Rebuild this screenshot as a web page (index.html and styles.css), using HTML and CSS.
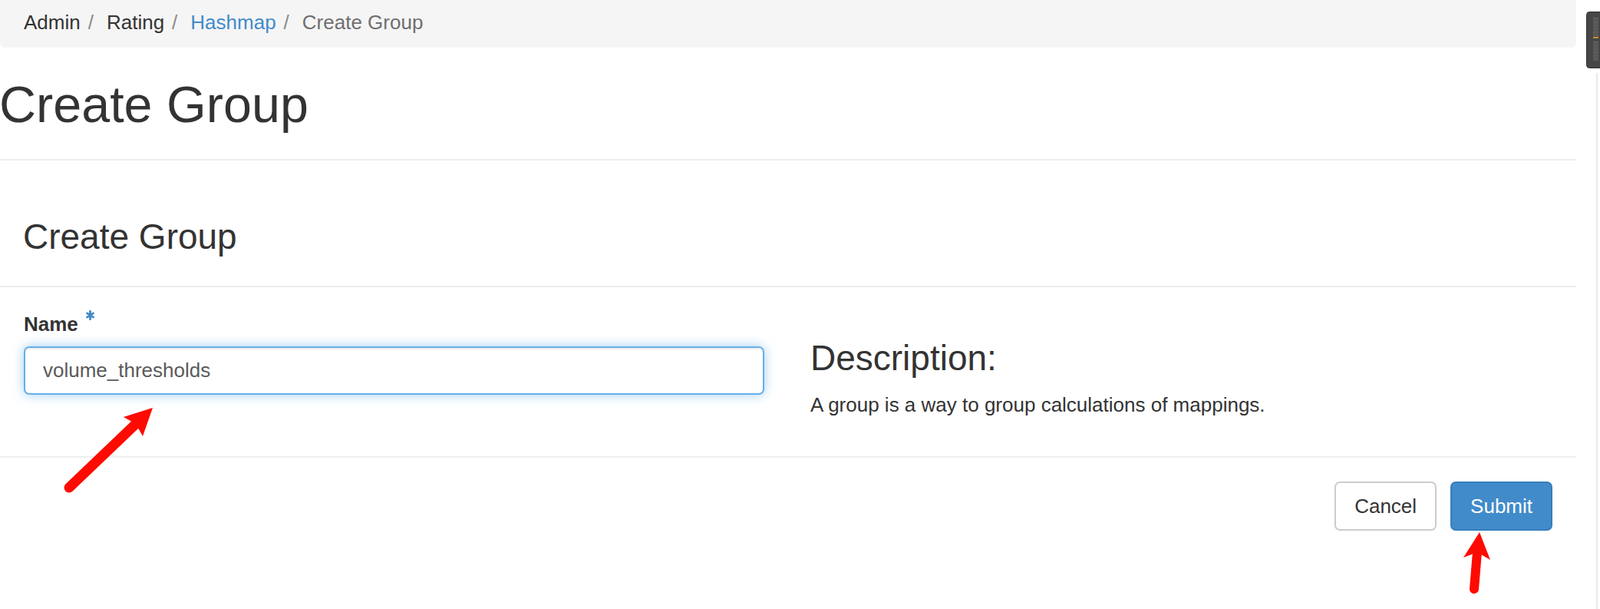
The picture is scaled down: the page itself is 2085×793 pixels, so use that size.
FILE: index.html
```html
<!DOCTYPE html>
<html lang="en">
<head>
<meta charset="utf-8">
<title>Create Group</title>
<link rel="stylesheet" href="styles.css">
</head>
<body>
<div class="page">
  <ol class="breadcrumb">
    <li>Admin</li>
    <li>Rating</li>
    <li><a href="#">Hashmap</a></li>
    <li class="active">Create Group</li>
  </ol>

  <div class="page-header">
    <h1 class="page-title">Create Group</h1>
  </div>

  <form class="modal">
    <div class="modal-header">
      <h3 class="heading">Create Group</h3>
    </div>
    <div class="modal-body">
      <div class="col">
        <label class="field-label" for="name">Name<svg class="required" viewBox="0 0 10 12" width="11" height="13"><g stroke="#428bca" stroke-width="2.6" stroke-linecap="round"><line x1="5" y1="1.2" x2="5" y2="10.8"/><line x1="1.3" y1="3.6" x2="8.7" y2="8.4"/><line x1="1.3" y1="8.4" x2="8.7" y2="3.6"/></g></svg></label>
        <input class="input" id="name" type="text" value="volume_thresholds">
      </div>
      <div class="col">
        <h3 class="heading desc-title">Description:</h3>
        <p class="desc-text">A group is a way to group calculations of mappings.</p>
      </div>
    </div>
    <div class="modal-footer">
      <button type="button" class="btn btn-default">Cancel</button>
      <button type="button" class="btn btn-primary">Submit</button>
    </div>
  </form>
</div>

<div class="scroll-edge"></div>

<svg class="widget" viewBox="0 0 18 75" width="18" height="75">
  <defs>
    <pattern id="stripes" width="7" height="2.6" patternUnits="userSpaceOnUse">
      <rect width="7" height="1.3" fill="#6b6b6b"/>
    </pattern>
  </defs>
  <rect x="0.5" y="0.5" width="26" height="73" rx="4" fill="#464646" stroke="#2f2f2f"/>
  <rect x="9" y="8" width="7" height="24" fill="url(#stripes)"/>
  <rect x="9" y="33" width="7" height="1.8" fill="#d7982a"/>
  <rect x="9" y="38" width="7" height="27" fill="url(#stripes)"/>
</svg>

<svg class="annotations" viewBox="0 0 2085 793" width="2085" height="793">
  <g fill="#fe0a00" stroke="#fe0a00">
    <line x1="90" y1="635" x2="178" y2="551" stroke-width="13" stroke-linecap="round"/>
    <polygon points="199,531 161,543 177,552 186,568" stroke="none"/>
    <line x1="1925" y1="719" x2="1921" y2="767" stroke-width="12" stroke-linecap="round"/>
    <polygon points="1928,693 1907,726 1925,719 1942,729" stroke="none"/>
  </g>
</svg>
</body>
</html>
```
FILE: styles.css
```css
html, body {
  margin: 0;
  padding: 0;
}

body {
  position: relative;
  width: 2085px;
  height: 793px;
  overflow: hidden;
  background: #fff;
  color: #333;
  font-family: "Liberation Sans", Arial, sans-serif;
  font-size: 26px;
  line-height: 36px;
}

.page {
  width: 2054px;
}

/* Breadcrumb */
.breadcrumb {
  list-style: none;
  margin: 0;
  height: 62px;
  box-sizing: border-box;
  padding: 0 31px 5px;
  display: flex;
  align-items: center;
  background: #f5f5f5;
  border-radius: 0 0 7px 7px;
}

.breadcrumb li + li::before {
  content: "/";
  color: #8a8a8a;
  margin: 0 17px 0 10px;
}

.breadcrumb a {
  color: #428bca;
  text-decoration: none;
}

.breadcrumb .active {
  color: #6f6f6f;
}

/* Page header */
.page-header {
  border-bottom: 2px solid #eee;
  padding-bottom: 35px;
}

.page-title {
  margin: 38px 0 0 -1px;
  font-size: 66.5px;
  line-height: 72px;
  font-weight: normal;
}

/* Form panel */
.modal {
  margin: 0;
}

.heading {
  margin: 0;
  font-size: 46px;
  line-height: 50px;
  font-weight: normal;
}

.modal-header {
  padding: 74px 31px 39px 30px;
  border-bottom: 2px solid #eee;
}

.modal-body {
  display: grid;
  grid-template-columns: 965px 966px;
  column-gap: 60px;
  align-items: start;
  padding: 30px 31px 31px;
  border-bottom: 2px solid #eee;
}

.field-label {
  display: block;
  font-weight: bold;
  line-height: 36px;
  margin-bottom: 11px;
}

.required {
  margin-left: 10px;
  vertical-align: 14px;
}

.input {
  display: block;
  width: 965px;
  height: 63px;
  box-sizing: border-box;
  margin: 0;
  padding: 0 23px;
  border: 2px solid #66afe9;
  border-radius: 7px;
  background: #fff;
  color: #5a5a5a;
  font-family: inherit;
  font-size: 26px;
  outline: none;
  box-shadow: inset 0 2px 2px rgba(0, 0, 0, 0.075), 0 0 15px rgba(102, 175, 233, 0.6);
}

.desc-title {
  margin: 37px 0 18px;
}

.desc-text {
  margin: 0 0 18px;
  line-height: 36px;
}

.modal-footer {
  display: flex;
  justify-content: flex-end;
  gap: 18px;
  padding: 31px 31px 0;
}

.btn {
  height: 64px;
  box-sizing: border-box;
  margin: 0;
  padding: 0 24px;
  border: 2px solid transparent;
  border-radius: 7px;
  font-family: inherit;
  font-size: 26px;
  line-height: normal;
  cursor: pointer;
}

.btn-default {
  background: #fff;
  border-color: #ccc;
  color: #333;
}

.btn-primary {
  background: #428bca;
  border-color: #357ebd;
  color: #fff;
}

/* Overlays */
.scroll-edge {
  position: absolute;
  left: 2080px;
  top: 95px;
  width: 2px;
  height: 698px;
  background: #e8e8e8;
}

.widget {
  position: absolute;
  left: 2067px;
  top: 15px;
  display: block;
}

.annotations {
  position: absolute;
  left: 0;
  top: 0;
  display: block;
  pointer-events: none;
}
```
